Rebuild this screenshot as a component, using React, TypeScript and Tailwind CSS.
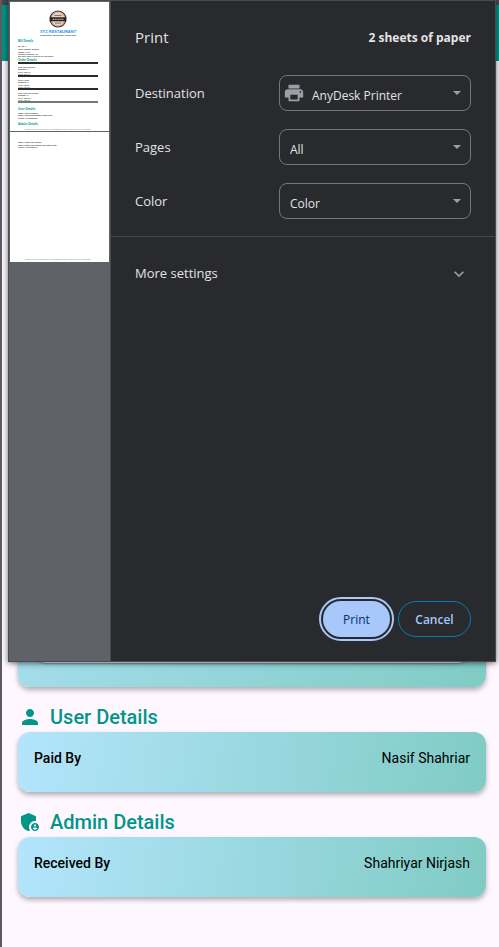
import type { ReactNode } from "react";
import { MdAdminPanelSettings, MdExpandMore, MdPerson } from "react-icons/md";

const orders = [
  { item: "Beef Biryani", qty: 1, price: "260.00", total: "260.00" },
  { item: "Pulao", qty: 2, price: "50.00", total: "100.00" },
  { item: "Chicken Korma", qty: 3, price: "260.00", total: "780.00" },
];

function SheetHeading({ children }: { children: ReactNode }) {
  return <h3 className="text-[3px] leading-[4px] font-bold text-[#009688]">{children}</h3>;
}

function SheetFooter() {
  return (
    <p className="mt-auto text-center text-[2px] leading-[4px] font-bold whitespace-nowrap text-[#90a4ae]">
      Thank you for choosing XYZ Restaurant! We hope to serve you again.
    </p>
  );
}

function Emblem() {
  return (
    <svg viewBox="0 0 40 40" className="mx-auto h-[18px] w-[18px] shrink-0" aria-hidden="true">
      <circle cx="20" cy="20" r="19" fill="#3a2a28" />
      <circle cx="20" cy="20" r="16.5" fill="#f1d9ca" />
      <circle cx="20" cy="20" r="15" fill="none" stroke="#8a7068" strokeWidth="2" strokeDasharray="2 1.4" />
      <circle cx="20" cy="20" r="12" fill="#ecd3c4" />
      <path d="M12 12h16M13 29h14" stroke="#7b625a" strokeWidth="2" />
      <path d="M1 16h38l-2 4 2 5H1l2-5z" fill="#2c201f" />
      <path d="M8 20.500h24" stroke="#ead2c5" strokeWidth="2.500" strokeDasharray="3 1.200" />
    </svg>
  );
}

function Preview() {
  return (
    <aside className="w-[102px] shrink-0 border-r border-[#4a4b4e] bg-[#5f6368] font-['Liberation_Sans',sans-serif]">
      <article className="mx-px mt-px flex h-[129px] flex-col bg-white pt-2 pr-[11px] pl-2 text-[2px] leading-[2px] font-bold text-[#444]">
        <Emblem />
        <h2 className="mt-px text-center text-[4px] leading-[5px] font-bold whitespace-nowrap text-[#2196f3]">XYZ RESTAURANT</h2>
        <p className="text-center">Dhanbagadi, Dhanmondi, Dhaka-1205</p>
        <div className="mt-[3px]">
          <SheetHeading>Bill Details</SheetHeading>
        </div>
        <div className="mt-0.5">
          <p>Bill No: 7</p>
          <p className="mt-px">Total Amount: 5138.00</p>
          <p className="mt-px">Status: PAID</p>
          <p>Payment Method: N/A</p>
          <p>Bill Date: 2024-10-05 01:27:12.000000</p>
        </div>
        <div className="mt-px">
          <SheetHeading>Order Details</SheetHeading>
        </div>
        {orders.map((order) => (
          <div key={order.item} className="border-t-2 border-[#2b2b2b] pt-0.5">
            <p>Item: {order.item}</p>
            <p>Quantity: {order.qty}</p>
            <p className="mt-px">Price: {order.price}</p>
            <p className="text-[#43a047]">Total: {order.total}</p>
          </div>
        ))}
        <hr className="border-t-2 border-[#777]" />
        <div className="mt-1">
          <SheetHeading>User Details</SheetHeading>
        </div>
        <p className="mt-px">Name: Nasif Shahriar</p>
        <p>Email: nasifshahriar588@gmail.com</p>
        <p className="mt-px">Phone: 01700000000</p>
        <div className="mt-[3px]">
          <SheetHeading>Admin Details</SheetHeading>
        </div>
        <SheetFooter />
      </article>
      <article className="mx-px mt-px flex h-[130px] flex-col bg-white pt-[9px] pr-[11px] pb-px pl-2 text-[2px] leading-[2px] font-bold text-[#444]">
        <p>Name: Shahriyar Nirjash</p>
        <p className="mt-px">Email: shahriyarnirjash1998@gmail.com</p>
        <p>Phone: 01700000077</p>
        <SheetFooter />
      </article>
    </aside>
  );
}

function SettingRow({ id, label, value, icon }: { id: string; label: string; value: string; icon?: ReactNode }) {
  return (
    <div className="flex items-center justify-between">
      <label htmlFor={id} className="pt-0.5">
        {label}
      </label>
      <div className="relative w-48">
        {icon && <span className="pointer-events-none absolute top-[7px] left-1 text-[#9aa0a6]">{icon}</span>}
        <select
          id={id}
          defaultValue={value}
          className={
            icon
              ? "h-9 w-full appearance-none rounded-lg border border-[#757775] bg-[#292a2d] pt-1.5 pl-8 text-[12px] text-[#e3e3e3]"
              : "h-9 w-full appearance-none rounded-lg border border-[#757775] bg-[#292a2d] pt-1.5 pl-2.5 text-[12px] text-[#e3e3e3]"
          }
        >
          <option>{value}</option>
        </select>
        <svg viewBox="0 0 8 4" className="pointer-events-none absolute top-4 right-2.5 h-1 w-2" aria-hidden="true">
          <path d="M0 0h8L4 4z" fill="#9aa0a6" />
        </svg>
      </div>
    </div>
  );
}

function PrinterIcon() {
  return (
    <svg viewBox="0 0 24 24" className="h-[22px] w-[22px]" fill="currentColor" aria-hidden="true">
      <path d="M19 8H5c-1.660 0-3 1.340-3 3v6h4v4h12v-4h4v-6c0-1.660-1.340-3-3-3zm-3 11H8v-5h8v5zm3-7c-.550 0-1-.450-1-1s.450-1 1-1 1 .450 1 1-.450 1-1 1zM18 3H6v4h12V3z" />
    </svg>
  );
}

function PrintDialog() {
  return (
    <div
      role="dialog"
      aria-label="Print"
      className="absolute top-0 right-[3px] left-1.5 flex h-[662px] border border-[#4a4b4e] bg-[#292a2d] font-['Open_Sans',sans-serif] text-[13px] text-[#e3e3e3] shadow-[0_1px_6px_rgba(0,0,0,0.6)]"
    >
      <Preview />
      <div className="flex flex-1 flex-col">
        <div className="flex h-[74px] items-center justify-between px-6">
          <h1 className="pb-0.5 text-[15px]">Print</h1>
          <span className="text-[12px] font-bold">2 sheets of paper</span>
        </div>
        <div className="flex flex-col gap-[18px] border-b border-[#47484a] px-6 pb-[17px]">
          <SettingRow id="destination" label="Destination" value="AnyDesk Printer" icon={<PrinterIcon />} />
          <SettingRow id="pages" label="Pages" value="All" />
          <SettingRow id="color" label="Color" value="Color" />
        </div>
        <button type="button" className="flex h-[74px] items-center justify-between px-6">
          More settings
          <MdExpandMore size={20} className="mr-0.5 text-[#9aa0a6]" />
        </button>
        <div className="mt-auto flex justify-end gap-2 px-6 pb-6 text-[12px]">
          <button
            type="button"
            className="h-9 w-[67px] rounded-full bg-[#a8c7fa] pt-0.5 font-medium text-[#062e6f] outline-2 outline-offset-2 outline-[#a8c7fa]"
          >
            Print
          </button>
          <button type="button" className="h-9 w-[73px] rounded-full border border-[#047db7] pt-0.5 font-semibold text-[#a8c7fa]">
            Cancel
          </button>
        </div>
      </div>
    </div>
  );
}

function DetailSection({ icon, title, label, value }: { icon: ReactNode; title: string; label: string; value: string }) {
  return (
    <section className="pt-4">
      <h2 className="flex h-[29px] items-center gap-2 pb-0.5 text-[20px] font-medium text-[#009688]">
        {icon}
        {title}
      </h2>
      <div className="flex h-[60px] justify-between rounded-xl bg-[linear-gradient(97deg,#b3e5fc,#80cbc4)] px-4 pt-4 text-[14px] leading-5 text-black shadow-[0_3px_5px_rgba(0,0,0,0.3)]">
        <span className="font-medium">{label}</span>
        <span>{value}</span>
      </div>
    </section>
  );
}

export default function App() {
  return (
    <div className="relative min-h-screen border-l-2 border-[#5c5c60] bg-[#fef7ff] font-['Roboto',sans-serif]">
      <div className="h-[5px] bg-[#444648]" />
      <header className="h-14 bg-[#009688]" />
      <main className="pt-[296px] pr-[13px] pb-12 pl-4">
        <div className="h-[330px] rounded-xl bg-[linear-gradient(125deg,#b3e5fc,#80cbc4)] px-4 pt-4 pb-6 shadow-[0_3px_5px_rgba(0,0,0,0.3)]">
          <div className="h-full rounded-xl bg-[#fef7ff] shadow-[0_1px_2px_rgba(0,0,0,0.3)]" />
        </div>
        <DetailSection icon={<MdPerson size={24} />} title="User Details" label="Paid By" value="Nasif Shahriar" />
        <DetailSection
          icon={<MdAdminPanelSettings size={24} />}
          title="Admin Details"
          label="Received By"
          value="Shahriyar Nirjash"
        />
      </main>
      <PrintDialog />
    </div>
  );
}
